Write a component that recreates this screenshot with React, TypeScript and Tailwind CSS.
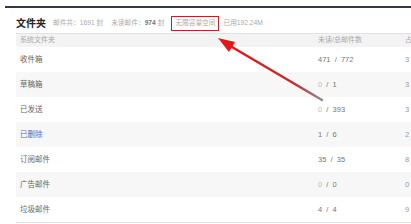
const rows = [
  { name: "收件箱", unread: "471", total: "772", last: "3", nameColor: "text-[#666]" },
  { name: "草稿箱", unread: "0", total: "1", last: "3", nameColor: "text-[#666]" },
  { name: "已发送", unread: "0", total: "393", last: "3", nameColor: "text-[#666]" },
  { name: "已删除", unread: "1", total: "6", last: "2", nameColor: "text-[#5565b5]" },
  { name: "订阅邮件", unread: "35", total: "35", last: "8", nameColor: "text-[#666]" },
  { name: "广告邮件", unread: "0", total: "0", last: "0", nameColor: "text-[#666]" },
  { name: "垃圾邮件", unread: "4", total: "4", last: "9", nameColor: "text-[#666]" },
];

export default function App() {
  return (
    <div
      className="relative h-[224px] w-[411px] overflow-hidden bg-white pt-[6px]"
      style={{ fontFamily: '"Liberation Sans", "Noto Sans CJK SC", sans-serif' }}
    >
      <div className="ml-[5px] h-[2px] bg-[#2e3846]" />

      <div className="pl-[16px]">
        <div className="flex h-[25px] items-center pt-[6px]">
          <span className="text-[10px] font-bold text-[#222]">文件夹</span>
          <span className="ml-[7px] text-[6.7px] text-[#aaa]">邮件共：1691 封</span>
          <span className="ml-[8px] text-[6.7px] text-[#aaa]">
            未读邮件：<b className="text-[#777]">974</b> 封
          </span>
          <span className="ml-[7px] border border-[#b3262e] px-[3px] py-[3px] text-[6.7px] leading-none text-[#aaa]">
            无限容量空间
          </span>
          <span className="ml-[4px] text-[6.7px] text-[#aaa]">已用192.24M</span>
        </div>

        <div className="w-[420px] border-b border-[#e2e2e2]">
          <div className="flex h-[14px] items-center border-t border-[#e2e2e2] bg-[#f3f3f3] text-[7px] text-[#aaa]">
            <span className="w-[302px] pl-[4px]">系统文件夹</span>
            <span className="w-[87px]">未读/总邮件数</span>
            <span>占</span>
          </div>
          {rows.map((row, i) => (
            <div
              key={row.name}
              className={`flex h-[25px] items-center text-[7.5px] ${i % 2 === 1 ? "bg-[#f7f7f7]" : "bg-white"}`}
            >
              <span className={`w-[302px] pl-[4px] ${row.nameColor}`}>{row.name}</span>
              <span className="w-[87px] whitespace-pre text-[#777]">
                <span className={row.unread === "0" ? "text-[#bbb]" : ""}>{row.unread}</span>
                {"  /  "}
                {row.total}
              </span>
              <span className="text-[#999]">{row.last}</span>
            </div>
          ))}
        </div>
      </div>

      <svg className="absolute left-0 top-0" width="411" height="224" viewBox="0 0 411 224">
        <defs>
          <linearGradient id="arrowFade" x1="322" y1="100" x2="220" y2="40" gradientUnits="userSpaceOnUse">
            <stop offset="0" stopColor="#8a8f98" />
            <stop offset="0.25" stopColor="#c23030" />
            <stop offset="1" stopColor="#e01818" />
          </linearGradient>
        </defs>
        <path d="M322 100 L232 47" stroke="url(#arrowFade)" strokeWidth="2.6" strokeLinecap="round" />
        <path d="M218 38 L235 42 L229 52 Z" fill="#e01818" />
      </svg>
    </div>
  );
}
